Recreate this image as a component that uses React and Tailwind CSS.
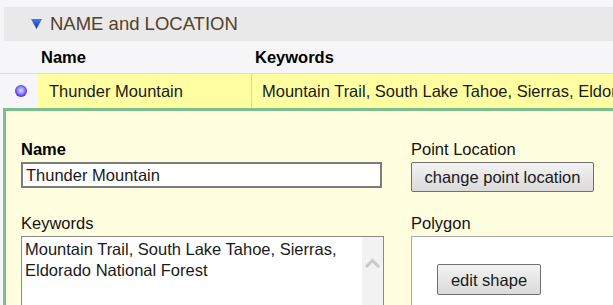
export default function App() {
  return (
    <div className="h-[305px] w-[613px] overflow-hidden bg-[#f6f6f9] font-['Liberation_Sans',Arial,sans-serif] text-[16.5px] leading-[18px] text-[#1a1a1a]">
      <div className="h-[7px]" />
      <SectionHeader title="NAME and LOCATION" />

      <div className="flex h-[33px] items-center border-b border-[#dcdcdc] font-bold text-black">
        <div className="w-[41px] shrink-0" />
        <div className="w-[214px] shrink-0">Name</div>
        <div>Keywords</div>
      </div>

      <div className="flex h-[34px]">
        <div className="flex w-[38px] shrink-0 items-center pl-[15px]">
          <span className="h-[12px] w-[12px] rounded-full bg-[radial-gradient(circle_at_50%_45%,#d4e4ff_0%,#8c84ff_40%,#5a22d4_72%,#4410a8_100%)]" />
        </div>
        <div className="flex w-[214px] shrink-0 items-center border-r border-[#d4d4bc] bg-[#ffffa2] pl-[11px]">
          Thunder Mountain
        </div>
        <div className="flex flex-1 items-center whitespace-nowrap bg-[#ffffa2] pl-[10px]">
          Mountain Trail, South Lake Tahoe, Sierras, Eldorado National Forest
        </div>
      </div>

      <div className="ml-[3px] h-[200px] border-[3px] border-r-0 border-b-0 border-[#7bbf8c] bg-[#ffffdf] pl-[15px] pt-[29px]">
        <div className="flex gap-[27px]">
          <div className="w-[363px] shrink-0">
            <Label bold>Name</Label>
            <div className="mt-[4px] flex h-[26px] w-[361px] items-center border-2 border-[#7c7c7c] bg-white pl-[3px]">
              Thunder Mountain
            </div>
            <div className="mt-[26px]">
              <Label>Keywords</Label>
            </div>
            <div className="mt-[4px] flex h-[90px] border border-[#8a8a8a] bg-white">
              <div className="flex-1 pl-[3px] pt-[2px] leading-[21px]">
                Mountain Trail, South Lake Tahoe, Sierras,
                <br />
                Eldorado National Forest
              </div>
              <div className="w-[21px] bg-[#f2f2f2] pt-[21px]">
                <svg width="17" height="11" viewBox="0 0 17 11" className="ml-[2px]">
                  <path d="M2 9 L8.5 2.5 L15 9" fill="none" stroke="#c9c9c9" strokeWidth="3" />
                </svg>
              </div>
            </div>
          </div>

          <div className="flex-1">
            <Label>Point Location</Label>
            <button className="mt-[4px] h-[30px] w-[183px] rounded-[2px] border border-[#707070] bg-gradient-to-b from-[#f3f3f3] to-[#dadada] text-[16.5px] text-[#1a1a1a]">
              change point location
            </button>
            <div className="mt-[22px]">
              <Label>Polygon</Label>
            </div>
            <div className="mt-[4px] h-[90px] border border-r-0 border-[#a8a8a8] bg-white pl-[25px] pt-[27px]">
              <button className="h-[31px] w-[104px] rounded-[2px] border border-[#707070] bg-gradient-to-b from-[#f3f3f3] to-[#dadada] text-[16.5px] text-[#1a1a1a]">
                edit shape
              </button>
            </div>
          </div>
        </div>
      </div>
    </div>
  );
}

function SectionHeader({ title }) {
  return (
    <div className="ml-[4px] flex h-[34px] items-center gap-[8px] bg-[#e9e9e9] pl-[27px] text-[18.5px] text-[#55412c]">
      <svg width="11" height="10" viewBox="0 0 11 10">
        <defs>
          <linearGradient id="tri" x1="0" y1="0" x2="0" y2="1">
            <stop offset="0" stopColor="#4a7af0" />
            <stop offset="1" stopColor="#1233a8" />
          </linearGradient>
        </defs>
        <path d="M0 0 L11 0 L5.5 10 Z" fill="url(#tri)" />
      </svg>
      <span>{title}</span>
    </div>
  );
}

function Label({ children, bold }) {
  return (
    <div className={bold ? "font-bold text-black" : "text-[#111]"}>
      {children}
    </div>
  );
}
